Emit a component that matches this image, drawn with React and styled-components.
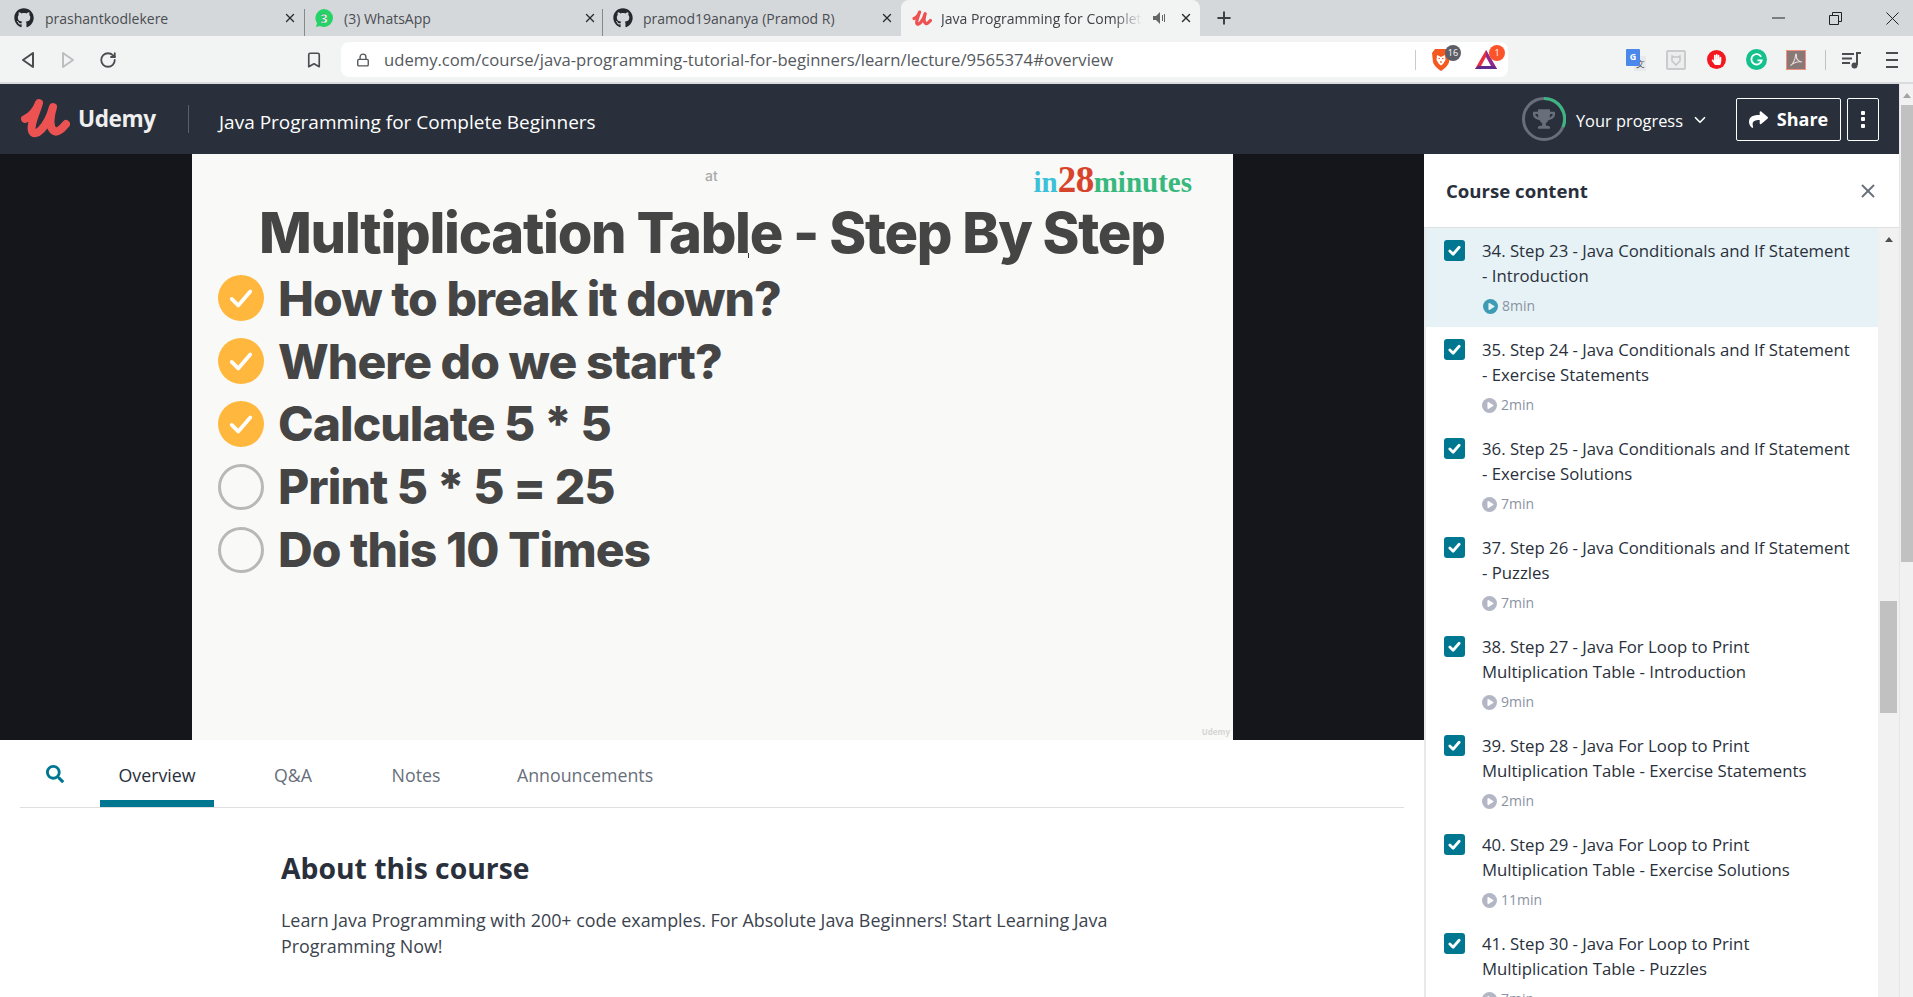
import React from "react";
import styled, { createGlobalStyle } from "styled-components";
import { X, Plus, RotateCw, Bookmark, Lock, ChevronDown } from "lucide-react";
import { FaGithub, FaShare, FaSearch, FaTrophy, FaHandPaper, FaPlay } from "react-icons/fa";

const Global = createGlobalStyle`
  html, body { margin: 0; padding: 0; height: 997px; overflow: hidden; background: #fff; }
  * { box-sizing: border-box; }
  body { font-family: "Open Sans", "Liberation Sans", sans-serif; color: #29303b; }
`;

const Screen = styled.div`
  width: 1913px; height: 997px; display: flex; flex-direction: column; overflow: hidden;
`;

/* ---------- browser tab strip ---------- */
const TabStrip = styled.div`
  height: 36px; flex: none; display: flex; align-items: stretch; background: #d5d8db;
`;
const Tab = styled.div`
  width: ${p => p.$w}px; flex: none; display: flex; align-items: center; position: relative;
  padding: 0 ${p => p.$right ?? 8}px 0 ${p => p.$pad}px; font-size: 14px; color: #4a4d51;
  ${p => p.$active ? `background:#f2f3f3; border-radius:8px 8px 0 0; color:#3f4246;` : ""}
  ${p => p.$sep ? `&::after{content:"";position:absolute;right:0;top:9px;bottom:0;width:1px;background:#85898c;}` : ""}
`;
const FavSlot = styled.span`
  width: 20px; height: 20px; flex: none; display: flex; align-items: center; justify-content: center; color: #24292e;
  margin-left: ${p => p.$ml ?? 0}px;
`;
const TabTitle = styled.span`
  margin-left: ${p => p.$gap ?? 11}px; white-space: nowrap; overflow: hidden; flex: ${p => p.$fixed ? "none" : "1"};
  ${p => p.$fixed ? `width:${p.$fixed}px; -webkit-mask-image:linear-gradient(90deg,#000 86%,transparent);mask-image:linear-gradient(90deg,#000 86%,transparent);` : ""}
`;
const TabClose = styled.span`
  width: 14px; height: 14px; flex: none; display: flex; align-items: center; justify-content: center; color: #2a2c2f; margin-left: ${p => p.$ml ?? 0}px;
`;
const NewTab = styled.span`
  width: 48px; flex: none; display: flex; align-items: center; justify-content: center; color: #3e4144;
`;
const WindowControls = styled.div`
  margin-left: auto; display: flex; align-items: center; gap: 37px; padding: 0 11px 0 0;
`;
const WinBtn = styled.span`
  width: 20px; height: 20px; display: flex; align-items: center; justify-content: center; color: #222;
`;

/* ---------- browser toolbar ---------- */
const Toolbar = styled.div`
  height: 48px; flex: none; display: flex; align-items: flex-start; padding: 6px 0 0 8px;
  background: #f2f3f3; border-bottom: 2px solid #d9dcde;
`;
const ToolBtn = styled.span`
  width: 40px; height: 35px; flex: none; display: flex; align-items: center; justify-content: center; color: ${p => p.$c || "#4a4c50"};
`;
const ToolSpacer = styled.span` width: 166px; flex: none; `;
const UrlPill = styled.div`
  width: 1167px; height: 35px; margin-left: 7px; flex: none; background: #fff; border-radius: 8px;
  display: flex; align-items: center; padding-left: 14px; position: relative;
`;
const LockSlot = styled.span` width: 16px; display: flex; justify-content: center; color: #55585c; `;
const UrlText = styled.span`
  margin-left: 13px; font-size: 16.65px; color: #55595e; white-space: nowrap; flex: 1;
`;
const UrlDivider = styled.span` width: 1px; height: 20px; background: #c9ccce; flex: none; `;
const PillIcon = styled.span`
  width: 45px; height: 30px; flex: none; display: flex; align-items: center; justify-content: center; position: relative;
  margin-left: ${p => p.$ml ?? 0}px;
`;
const Badge = styled.span`
  position: absolute; top: ${p => p.$top}px; left: ${p => p.$left}px; min-width: 16px; height: 16px; border-radius: 8px;
  background: ${p => p.$bg}; color: #fff; font-size: 9px; line-height: 16px; text-align: center;
`;
const ExtGroup = styled.div` display: flex; margin-left: 108px; align-items: center; height: 35px; `;
const ToolDivider = styled.span` width: 1px; height: 20px; background: #bfc2c4; margin: 0 6px 0 9px; flex: none; `;
const TranslateTile = styled.span`
  position: relative; width: 20px; height: 22px; display: block;
`;
const GTile = styled.span`
  position: absolute; left: 0; top: 0; width: 14px; height: 17px; background: #4c87ec; color: #fff; font-size: 9px; font-weight: 700;
  line-height: 15px; text-align: center; border-radius: 1px; z-index: 1;
`;
const ZhTile = styled.span`
  position: absolute; right: 0; bottom: 0; width: 12px; height: 15px; background: #e8e9ea; color: #555; font-size: 9px; line-height: 15px; text-align: center;
`;
const ShieldBox = styled.span`
  width: 20px; height: 20px; border: 2px solid #c8cccd; border-radius: 2px; background: #eceded; display: flex; align-items: center; justify-content: center;
`;
const StopBadge = styled.span`
  width: 19px; height: 19px; border-radius: 50%; background: #f3171f; color: #fff; display: flex; align-items: center; justify-content: center;
`;
const GrammarlyBadge = styled.span`
  width: 21px; height: 21px; border-radius: 50%; background: #14c08c; display: flex; align-items: center; justify-content: center;
`;
const PdfBox = styled.span`
  width: 20px; height: 20px; background: #8a7876; border: 1px solid #ee8f80; display: flex; align-items: center; justify-content: center;
`;

/* ---------- page ---------- */
const PageWrap = styled.div` flex: 1; min-height: 0; display: flex; `;
const Page = styled.div` width: 1899px; flex: none; display: flex; flex-direction: column; min-height: 0; `;
const PageScroll = styled.div`
  width: 14px; flex: none; background: #f1f1f1; border-left: 1px solid #e6e6e6; display: flex; flex-direction: column; align-items: center; padding-top: 9px;
`;
const ArrowUp = styled.span`
  width: 0; height: 0; border-left: 4px solid transparent; border-right: 4px solid transparent; border-bottom: 5px solid ${p => p.$c || "#a3a3a3"}; flex: none;
`;
const PageThumb = styled.div`
  width: 12px; height: 457px; margin: 7px 0 0 1px; background: #c1c1c1; flex: none;
`;

/* Udemy header */
const Header = styled.header`
  height: 70px; flex: none; background: #29303b; display: flex; align-items: center; color: #fff;
`;
const LogoMark = styled.span` margin-left: 20px; width: 50px; height: 42px; display: block; flex: none; `;
const LogoWord = styled.span`
  margin-left: 8px; font-size: 22.6px; font-weight: 700; letter-spacing: -0.4px; color: #efefef; width: 110px; flex: none; padding-bottom: 2px;
`;
const HeaderDivider = styled.span` width: 1px; height: 28px; background: #5a606b; flex: none; `;
const CourseTitle = styled.span` margin-left: 30px; font-size: 19px; white-space: nowrap; padding-top: 5px; `;
const HeaderRight = styled.div` margin-left: auto; display: flex; align-items: center; padding-right: 20px; `;
const Ring = styled.span` position: relative; width: 44px; height: 44px; display: flex; align-items: center; justify-content: center; color: #686f7a; `;
const RingSvg = styled.svg` position: absolute; inset: 0; `;
const ProgressLabel = styled.span` margin-left: 10px; font-size: 16.4px; white-space: nowrap; padding-top: 2px; `;
const Chevron = styled.span` margin-left: 8px; display: flex; width: 18px; padding-top: 2px; `;
const HeaderBtn = styled.button`
  height: 43px; border: 1px solid #fff; border-radius: 2px; background: transparent; color: #fff; font: 700 18px "Open Sans", sans-serif;
  display: flex; align-items: center; justify-content: center; gap: 9px; padding: 0;
  width: ${p => p.$w}px; margin-left: ${p => p.$ml}px;
`;
const Dots = styled.span` display: flex; flex-direction: column; gap: 2.5px; `;
const Dot = styled.span` width: 4px; height: 4px; border-radius: 1px; background: #fff; `;

/* body */
const Body = styled.div` flex: 1; min-height: 0; display: flex; `;
const LeftPane = styled.main` width: 1424px; flex: none; display: flex; flex-direction: column; `;
const Stage = styled.section` height: 586px; flex: none; background: #14161b; padding-left: 192px; `;
const Slide = styled.div`
  width: 1041px; height: 586px; background: #f9f9f7; position: relative; font-family: Inter, "Liberation Sans", sans-serif; color: #464545;
`;
const SlideTop = styled.div` height: 46px; display: flex; align-items: flex-start; padding-right: 41px; `;
const SlideAt = styled.span` margin: 13px 0 0 513px; font-size: 14px; font-weight: 500; color: #a9a9a9; `;
const Brand = styled.span`
  margin-left: auto; margin-top: 9px; font: 700 29px/34px "Liberation Serif", serif; color: #37b87c;
`;
const BrandIn = styled.span` color: #3cc1d8; `;
const Brand28 = styled.span` color: #d8432c; font-size: 37px; letter-spacing: -0.5px; `;
const SlideTitle = styled.h1`
  margin: 0 0 3px 67px; font-size: 56px; line-height: 66px; font-weight: 800; white-space: nowrap; letter-spacing: -1.26px; height: 64px;
`;
const SlideRow = styled.div`
  height: 62.8px; display: flex; align-items: center; padding-left: 26px; gap: 14px; font-size: 48px; font-weight: 800; white-space: nowrap; letter-spacing: -0.95px;
`;
const TodoMark = styled.span`
  width: 46px; height: 46px; border-radius: 50%; flex: none; display: flex; align-items: center; justify-content: center;
  background: ${p => p.$done ? "#ffb83d" : "transparent"}; border: ${p => p.$done ? "none" : "3px solid #b8b8b8"};
`;
const Watermark = styled.span`
  position: absolute; right: 3px; bottom: 3px; font-size: 8px; color: #d6d6d4; font-family: "Open Sans", sans-serif; font-weight: 700;
`;
const CursorMark = styled.span`
  position: absolute; left: 556px; top: 99px; width: 1px; height: 5px; background: #333;
`;

/* tabs */
const TabsBar = styled.nav`
  height: 68px; margin: 0 20px; flex: none; display: flex; align-items: stretch; border-bottom: 1px solid #dedfe0; width: 1384px;
`;
const SearchBtn = styled.span` width: 80px; flex: none; display: flex; align-items: center; padding: 0 0 0 26px; color: #007791; `;
const CourseTab = styled.span`
  padding: 10px 18px 0; margin-right: ${p => p.$mr}px; display: flex; align-items: center; font-size: 17.8px; height: 67px; justify-content: center;
  width: ${p => p.$w}px;
  color: ${p => p.$on ? "#29303b" : "#686f7a"}; border-bottom: 7px solid ${p => p.$on ? "#007791" : "transparent"};
`;
const About = styled.section` padding: 41px 0 0 281px; `;
const AboutTitle = styled.h2` margin: 0; font-size: 28.3px; line-height: 38px; font-weight: 700; color: #29303b; `;
const AboutText = styled.p` margin: 20px 0 0; width: 860px; font-size: 17.9px; line-height: 26px; color: #3c434e; `;

/* sidebar */
const Sidebar = styled.aside` width: 475px; flex: none; background: #fff; display: flex; flex-direction: column; min-height: 0; `;
const SideHead = styled.div`
  height: 74px; flex: none; display: flex; align-items: center; justify-content: space-between; padding: 0 20px 0 22px;
  border-bottom: 1px solid #dedfe0; box-shadow: 0 1px 2px rgba(0,0,0,.05);
`;
const SideTitle = styled.span` font-size: 18.6px; font-weight: 700; color: #29303b; `;
const SideClose = styled.span` display: flex; color: #686f7a; `;
const SideBody = styled.div` flex: 1; min-height: 0; display: flex; border-left: 2px solid #e8e9eb; `;
const LessonList = styled.div` flex: 1; min-width: 0; overflow: hidden; `;
const Lesson = styled.div`
  height: 99px; display: flex; padding: 12px 0 0 18px; background: ${p => p.$on ? "#e6f2f5" : "#fff"};
`;
const Check = styled.span`
  width: 21px; height: 21px; border-radius: 3px; background: #007791; flex: none; display: flex; align-items: center; justify-content: center; color: #fff;
`;
const LessonBody = styled.div` margin: -2px 0 0 17px; width: 373px; `;
const LessonTitle = styled.div` font-size: 16.75px; line-height: 25px; color: #29303b; `;
const LessonMeta = styled.div` margin-top: 9px; display: flex; align-items: center; gap: 4px; font-size: 14px; line-height: 18px; color: #8a92a3; `;
const PlayDisc = styled.span`
  width: 15px; height: 15px; border-radius: 50%; background: ${p => p.$on ? "#3d9cb4" : "#b3b7c5"}; color: ${p => p.$on ? "#e6f2f5" : "#fff"};
  display: flex; align-items: center; justify-content: center; padding-left: 1px; flex: none; margin-left: ${p => p.$on ? 1 : 0}px;
`;
const ListScroll = styled.div`
  width: 21px; flex: none; background: #f1f1f1; display: flex; flex-direction: column; align-items: center; padding-top: 9px;
`;
const ListThumb = styled.div` width: 17px; height: 112px; margin-top: 359px; background: #c1c1c1; flex: none; `;

const UdemyU = ({ w = 50, h = 42 }) => (
  <svg width={w} height={h} viewBox="0 0 50 42" fill="none" stroke="#ec5252" strokeWidth="8" strokeLinecap="round" strokeLinejoin="round">
    <path d="M5 21 C11 19 17 11 19 5 C15 18 10 27 12 33 C15 40 27 30 33 9 C29 22 30 30 34 33 C37 35 42 31 46 26" />
  </svg>
);

const WhatsFav = () => (
  <svg width="20" height="20" viewBox="0 0 20 20">
    <path d="M10 1 a9 9 0 0 1 0 18 a9 9 0 0 1 -4-1 l-4 1 l1-4 a9 9 0 0 1 7-14z" fill="#25d366" />
    <text x="10" y="14.5" textAnchor="middle" fontSize="13" fontWeight="700" fill="#fff" fontFamily="Open Sans" stroke="#0a6b3a" strokeWidth=".3">3</text>
  </svg>
);

const BackArrow = ({ color, flip }) => (
  <svg width="16" height="18" viewBox="0 0 16 18" fill="none" stroke={color} strokeWidth="2" strokeLinejoin="round" style={flip ? { transform: "scaleX(-1)" } : undefined}>
    <path d="M13 2 L3 9 L13 16 Z" />
  </svg>
);

const Brave = () => (
  <svg width="20" height="24" viewBox="0 0 20 24">
    <path d="M4 1 H16 L19 5 L18 14 C17 18 13 21 10 23 C7 21 3 18 2 14 L1 5 Z" fill="#f4591f" />
    <path d="M6 7 L10 9 L14 7 L14.5 12 L12 16 L10 17.5 L8 16 L5.5 12 Z" fill="#fff" />
    <path d="M7.5 10.5 H9 M11 10.5 H12.5 M10 13 V15" stroke="#f4591f" strokeWidth="1.2" />
  </svg>
);

const Bat = () => (
  <svg width="24" height="22" viewBox="0 0 24 22">
    <path d="M12 1 L23 20 H1 Z" fill="#e6303c" />
    <path d="M12 1 L23 20 H17 L12 10 Z" fill="#8f2a8c" />
    <path d="M1 20 H23 L20 17 H4 Z" fill="#5f2b8c" />
    <path d="M12 8 L17 17 H7 Z" fill="#fff" />
  </svg>
);

const Playlist = () => (
  <svg width="20" height="18" viewBox="0 0 20 18" fill="none" stroke="#4a4c50" strokeWidth="2">
    <path d="M0 3 H12 M0 7.5 H10 M0 12 H8" />
    <path d="M15 14 V2 H19" />
    <circle cx="12.5" cy="14.5" r="3" fill="#4a4c50" stroke="none" />
  </svg>
);

const Menu = () => (
  <svg width="14" height="18" viewBox="0 0 14 18" stroke="#4a4c50" strokeWidth="2"><path d="M1 2 H13 M1 9 H13 M1 16 H13" /></svg>
);

const CheckTick = ({ size = 13, stroke = "#fff", w = 3 }) => (
  <svg width={size} height={size} viewBox="0 0 14 14" fill="none" stroke={stroke} strokeWidth={w} strokeLinecap="round" strokeLinejoin="round">
    <path d="M2 7.5 L5.5 11 L12 3.5" />
  </svg>
);

const lessons = [
  ["34. Step 23 - Java Conditionals and If Statement - Introduction", "8min", true],
  ["35. Step 24 - Java Conditionals and If Statement - Exercise Statements", "2min"],
  ["36. Step 25 - Java Conditionals and If Statement - Exercise Solutions", "7min"],
  ["37. Step 26 - Java Conditionals and If Statement - Puzzles", "7min"],
  ["38. Step 27 - Java For Loop to Print Multiplication Table - Introduction", "9min"],
  ["39. Step 28 - Java For Loop to Print Multiplication Table - Exercise Statements", "2min"],
  ["40. Step 29 - Java For Loop to Print Multiplication Table - Exercise Solutions", "11min"],
  ["41. Step 30 - Java For Loop to Print Multiplication Table - Puzzles", "7min"],
];

const todos = [
  ["How to break it down?", true],
  ["Where do we start?", true],
  ["Calculate 5 * 5", true],
  ["Print 5 * 5 = 25", false],
  ["Do this 10 Times", false],
];

export default function App() {
  return (
    <Screen>
      <Global />
      <TabStrip>
        <Tab $w={305} $pad={14} $sep>
          <FavSlot><FaGithub size={20} /></FavSlot>
          <TabTitle>prashantkodlekere</TabTitle>
          <TabClose><X size={14} strokeWidth={2.4} /></TabClose>
        </Tab>
        <Tab $w={298} $pad={9} $right={6} $sep>
          <FavSlot><WhatsFav /></FavSlot>
          <TabTitle $gap={10}>(3) WhatsApp</TabTitle>
          <TabClose><X size={14} strokeWidth={2.4} /></TabClose>
        </Tab>
        <Tab $w={298} $pad={10} $right={7}>
          <FavSlot><FaGithub size={20} /></FavSlot>
          <TabTitle $gap={10}>pramod19ananya (Pramod R)</TabTitle>
          <TabClose><X size={14} strokeWidth={2.4} /></TabClose>
        </Tab>
        <Tab $w={299} $pad={11} $active>
          <FavSlot><UdemyU w={20} h={17} /></FavSlot>
          <TabTitle $gap={9} $fixed={201}>Java Programming for Complete Beginners</TabTitle>
          <FavSlot $ml={7}>
            <svg width="13" height="12" viewBox="0 0 13 12" fill="#666"><path d="M0 4 H3 L7 0 V12 L3 8 H0 Z M9 3 H10 V9 H9 Z M11 2 H12 V10 H11 Z" /></svg>
          </FavSlot>
          <TabClose $ml={10}><X size={14} strokeWidth={2.4} /></TabClose>
        </Tab>
        <NewTab><Plus size={20} strokeWidth={2.4} /></NewTab>
        <WindowControls>
          <WinBtn><svg width="13" height="2" viewBox="0 0 13 2"><path d="M0 1 H13" stroke="#222" /></svg></WinBtn>
          <WinBtn><svg width="13" height="13" viewBox="0 0 13 13" fill="none" stroke="#222"><path d="M.5 3.5 H9.5 V12.5 H.5 Z M3.5 3.5 V.5 H12.5 V9.5 H9.5" /></svg></WinBtn>
          <WinBtn><svg width="13" height="13" viewBox="0 0 13 13" stroke="#222"><path d="M.5 .5 L12.5 12.5 M12.5 .5 L.5 12.5" /></svg></WinBtn>
        </WindowControls>
      </TabStrip>

      <Toolbar>
        <ToolBtn><BackArrow color="#4a4c50" /></ToolBtn>
        <ToolBtn><BackArrow color="#bcbfc2" flip /></ToolBtn>
        <ToolBtn><RotateCw size={18} strokeWidth={2.4} /></ToolBtn>
        <ToolSpacer />
        <ToolBtn><Bookmark size={18} strokeWidth={2.2} /></ToolBtn>
        <UrlPill>
          <LockSlot><Lock size={14} strokeWidth={2.4} /></LockSlot>
          <UrlText>udemy.com/course/java-programming-tutorial-for-beginners/learn/lecture/9565374#overview</UrlText>
          <UrlDivider />
          <PillIcon $ml={2}>
            <Brave />
            <Badge $top={0} $left={27} $bg="#5b5e66">16</Badge>
          </PillIcon>
          <PillIcon>
            <Bat />
            <Badge $top={0} $left={26} $bg="#fb542b">1</Badge>
          </PillIcon>
        </UrlPill>
        <ExtGroup>
          <ToolBtn>
            <TranslateTile><GTile>G</GTile><ZhTile>文</ZhTile></TranslateTile>
          </ToolBtn>
          <ToolBtn>
            <ShieldBox>
              <svg width="12" height="12" viewBox="0 0 12 12" fill="none" stroke="#c3c7c9" strokeWidth="1.5"><path d="M2 2 L4 3 H8 L10 2 V7 L6 11 L2 7 Z" /></svg>
            </ShieldBox>
          </ToolBtn>
          <ToolBtn><StopBadge><FaHandPaper size={11} /></StopBadge></ToolBtn>
          <ToolBtn>
            <GrammarlyBadge>
              <svg width="13" height="13" viewBox="0 0 14 14" fill="none" stroke="#fff" strokeWidth="2"><path d="M12 4 A5.6 5.6 0 1 0 12.6 8 H8" /></svg>
            </GrammarlyBadge>
          </ToolBtn>
          <ToolBtn>
            <PdfBox>
              <svg width="14" height="14" viewBox="0 0 14 14" fill="none" stroke="#e3dcda" strokeWidth="1.1"><path d="M1.5 12.5 C4 11 6.5 6 6.5 2 C6.5 0 8 1 7.5 3.5 C7 6 10 9 13 9 C10 8.5 5 9.5 1.5 12.5 Z" /></svg>
            </PdfBox>
          </ToolBtn>
          <ToolDivider />
          <ToolBtn><Playlist /></ToolBtn>
          <ToolBtn><Menu /></ToolBtn>
        </ExtGroup>
      </Toolbar>

      <PageWrap>
        <Page>
          <Header>
            <LogoMark><UdemyU /></LogoMark>
            <LogoWord>Udemy</LogoWord>
            <HeaderDivider />
            <CourseTitle>Java Programming for Complete Beginners</CourseTitle>
            <HeaderRight>
              <Ring>
                <RingSvg width="44" height="44" viewBox="0 0 44 44" fill="none" strokeWidth="3">
                  <circle cx="22" cy="22" r="20.5" stroke="#686f7a" />
                  <path d="M22 1.5 A20.5 20.5 0 0 1 41 30" stroke="#3cb582" />
                </RingSvg>
                <FaTrophy size={22} />
              </Ring>
              <ProgressLabel>Your progress</ProgressLabel>
              <Chevron><ChevronDown size={18} strokeWidth={2.2} /></Chevron>
              <HeaderBtn $w={105} $ml={27}><FaShare size={19} />Share</HeaderBtn>
              <HeaderBtn $w={32} $ml={6}><Dots><Dot /><Dot /><Dot /></Dots></HeaderBtn>
            </HeaderRight>
          </Header>
          <Body>
            <LeftPane>
              <Stage>
                <Slide>
                  <SlideTop>
                    <SlideAt>at</SlideAt>
                    <Brand><BrandIn>in</BrandIn><Brand28>28</Brand28>minutes</Brand>
                  </SlideTop>
                  <SlideTitle>Multiplication Table - Step By Step</SlideTitle>
                  {todos.map(([t, done]) => (
                    <SlideRow key={t}>
                      <TodoMark $done={done}>{done && <CheckTick size={26} w={2} />}</TodoMark>
                      {t}
                    </SlideRow>
                  ))}
                  <CursorMark />
                  <Watermark>Udemy</Watermark>
                </Slide>
              </Stage>
              <TabsBar>
                <SearchBtn><FaSearch size={18} /></SearchBtn>
                <CourseTab $on $w={114} $mr={41}>Overview</CourseTab>
                <CourseTab $w={76} $mr={43}>Q&amp;A</CourseTab>
                <CourseTab $w={84} $mr={42}>Notes</CourseTab>
                <CourseTab $w={170} $mr={0}>Announcements</CourseTab>
              </TabsBar>
              <About>
                <AboutTitle>About this course</AboutTitle>
                <AboutText>Learn Java Programming with 200+ code examples. For Absolute Java Beginners! Start Learning Java Programming Now!</AboutText>
              </About>
            </LeftPane>
            <Sidebar>
              <SideHead>
                <SideTitle>Course content</SideTitle>
                <SideClose><X size={22} strokeWidth={2} /></SideClose>
              </SideHead>
              <SideBody>
                <LessonList>
                  {lessons.map(([t, d, on]) => (
                    <Lesson key={t} $on={on}>
                      <Check><CheckTick size={13} /></Check>
                      <LessonBody>
                        <LessonTitle>{t}</LessonTitle>
                        <LessonMeta>
                          <PlayDisc $on={on}><FaPlay size={7} /></PlayDisc>
                          {d}
                        </LessonMeta>
                      </LessonBody>
                    </Lesson>
                  ))}
                </LessonList>
                <ListScroll>
                  <ArrowUp $c="#505050" />
                  <ListThumb />
                </ListScroll>
              </SideBody>
            </Sidebar>
          </Body>
        </Page>
        <PageScroll>
          <ArrowUp />
          <PageThumb />
        </PageScroll>
      </PageWrap>
    </Screen>
  );
}
